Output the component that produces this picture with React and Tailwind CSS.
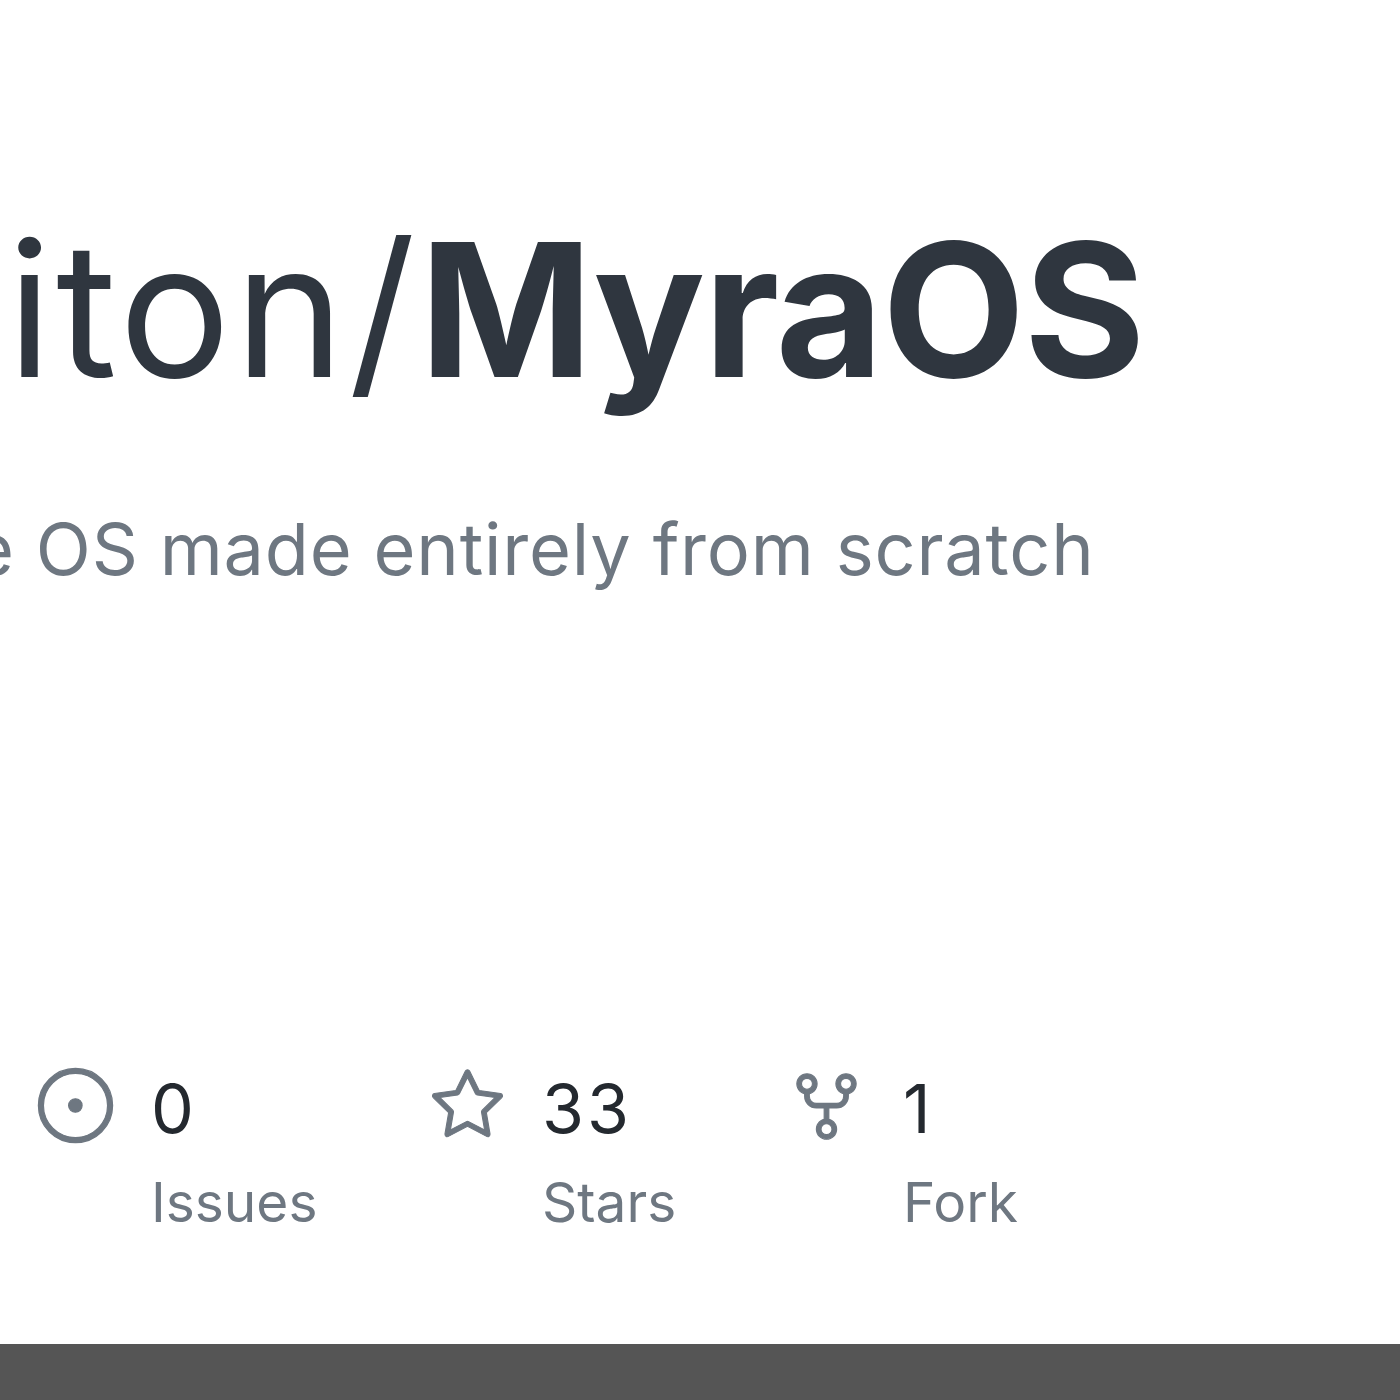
import { GoIssueOpened, GoStar, GoRepoForked } from 'react-icons/go';

const stats = [
    { Icon: GoIssueOpened, value: '0', label: 'Issues', width: 'w-[395px]', gap: 'gap-[35px]', icon: 'w-[81px] h-[81px] -mt-[5px]' },
    { Icon: GoStar, value: '33', label: 'Stars', width: 'w-[359px]', gap: 'gap-[37px]', icon: 'w-[75px] h-[75px] -mt-[1px]' },
    { Icon: GoRepoForked, value: '1', label: 'Fork', width: 'w-[300px]', gap: 'gap-[39px]', icon: 'w-[75px] h-[75px] -mt-[1px]' },
];

const Stat = ({ Icon, value, label, width, gap, icon }) => (
    <div className={`flex items-start ${gap} ${width}`}>
        {/* octicons come out too thin at this size, so add a small stroke */}
        <Icon className={`${icon} text-[#6e7781] shrink-0`} stroke="currentColor" strokeWidth="0.35" />
        <div className="flex flex-col">
            <span className="text-[68px] leading-[76px] tracking-[3px] text-[#24292f]">{value}</span>
            <span className="text-[55px] leading-[60px] mt-[26px] text-[#6e7781]">{label}</span>
        </div>
    </div>
);

const App = () => {
    return (
        <div className="h-[1400px] w-[1400px] overflow-hidden flex flex-col bg-white font-['Inter',sans-serif]">
            <div className="flex-1 flex flex-col pt-[216px] pl-[7px]">
                <h1 className="text-[186px] leading-[188px] text-[#2f363f] whitespace-nowrap">
                    <span className="tracking-[4px]">iton/</span>
                    <b className="font-bold tracking-[-1.5px]">MyraOS</b>
                </h1>
                <p className="mt-[105px] -ml-[35px] text-[72px] leading-[80px] tracking-[0.8px] text-[#6e7781] whitespace-nowrap">
                    e OS made entirely from scratch
                </p>
                <div className="mt-[481px] ml-[28px] flex">
                    {stats.map((s) => (
                        <Stat key={s.label} {...s} />
                    ))}
                </div>
            </div>
            <div className="h-[56px] bg-[#555555]" />
        </div>
    );
};

export default App;
